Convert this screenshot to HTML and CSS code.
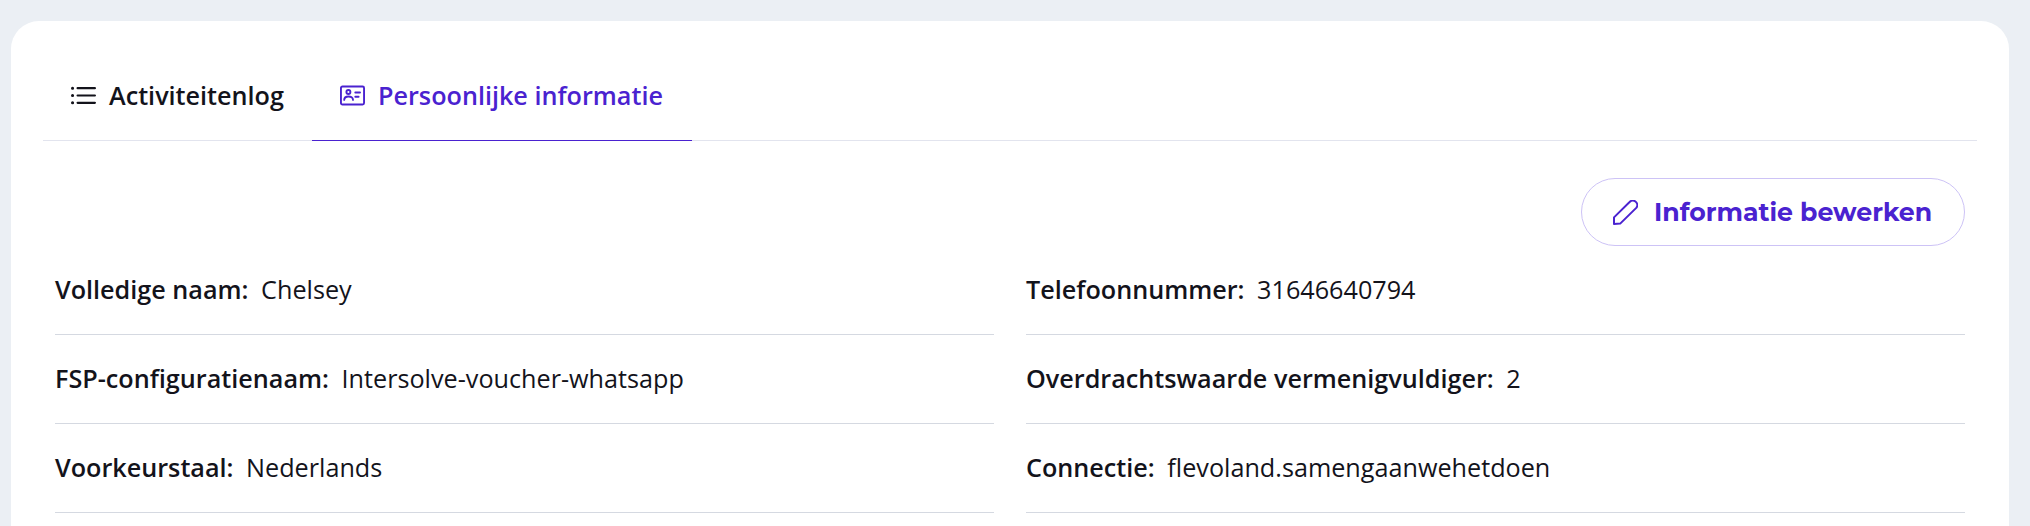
FILE: index.html
```html
<!DOCTYPE html>
<html lang="nl">
<head>
<meta charset="utf-8">
<title>Persoonlijke informatie</title>
<link rel="stylesheet" href="styles.css">
</head>
<body>
<main class="card">
  <nav class="tabs">
    <a class="tab">
      <svg class="icon" viewBox="0 0 25 25" fill="none" stroke="currentColor" stroke-linecap="round" stroke-width="2.2"><path d="M6.6 5.2H23.9M6.6 12.5H23.9M6.6 19.8H23.9"/><path stroke-width="3" d="M1.5 5.2H1.6M1.5 12.5H1.6M1.5 19.8H1.6"/></svg>
      <span>Activiteitenlog</span>
    </a>
    <a class="tab tab-active">
      <svg class="icon" viewBox="0 0 25 20" fill="none" stroke="currentColor" stroke-linecap="round" stroke-width="1.9"><rect x=".95" y=".95" width="23.1" height="18.1" rx="1.5"/><circle cx="8.4" cy="6.5" r="2"/><path d="M4.2 14.4C4.2 9.8 13 9.8 13 14.4M15.3 7H20M15.3 11.2H18.6"/></svg>
      <span>Persoonlijke informatie</span>
    </a>
  </nav>
  <section class="panel">
    <div class="actions">
      <button class="edit">
        <svg class="icon" viewBox="0 0 25 25" fill="none" stroke="currentColor" stroke-linejoin="round" stroke-width="2"><path d="M1 24V17.4L16.6 2A4.4 4.4 0 0 1 23 8.1L7.2 23.6Z"/></svg>
        <span>Informatie bewerken</span>
      </button>
    </div>
    <dl class="grid">
      <div class="row"><dt>Volledige naam:</dt><dd>Chelsey</dd></div>
      <div class="row"><dt>Telefoonnummer:</dt><dd>31646640794</dd></div>
      <div class="row"><dt>FSP-configuratienaam:</dt><dd>Intersolve-voucher-whatsapp</dd></div>
      <div class="row"><dt>Overdrachtswaarde vermenigvuldiger:</dt><dd>2</dd></div>
      <div class="row"><dt>Voorkeurstaal:</dt><dd>Nederlands</dd></div>
      <div class="row"><dt>Connectie:</dt><dd>flevoland.samengaanwehetdoen</dd></div>
    </dl>
  </section>
</main>
</body>
</html>
```
FILE: styles.css
```css
* { box-sizing: border-box; }
body {
  margin: 0;
  height: 526px;
  padding: 21px 21px 0 11px;
  background: #ebeff4;
  color: #13131b;
  font: 400 25.2px/36px "Open Sans", sans-serif;
}
.card {
  height: 505px;
  padding: 32px 32px 0;
  border-radius: 28px 28px 0 0;
  background: #fff;
}
.tabs {
  display: flex;
  height: 88px;
  box-shadow: inset 0 -1px #e2e4ee;
}
.tab {
  display: flex;
  align-items: center;
  gap: 13px;
  height: 88px;
  padding: 0 28px 3px;
  font-weight: 600;
}
.tab span { margin-top: -1px; }
.tab:first-child { width: 269px; }
.tab-active {
  width: 380px;
  color: #4a22d0;
  box-shadow: inset 0 -1px #4a22d0;
}
.icon { flex: none; width: 25px; height: 25px; }
.panel { padding: 37px 12px 0; }
.actions { display: flex; justify-content: flex-end; }
.edit {
  display: flex;
  align-items: center;
  gap: 16px;
  width: 384px;
  height: 68px;
  padding: 0 0 0 31px;
  border: 1px solid #cdc3f6;
  border-radius: 34px;
  background: #fff;
  color: #4a22d0;
  font: 700 25.2px/36px Montserrat, Inter, sans-serif;
  white-space: nowrap;
}
.grid {
  display: grid;
  grid-template-columns: 1fr 1fr;
  column-gap: 32px;
  margin: 0;
}
.row {
  display: flex;
  gap: 12.6px;
  height: 89px;
  padding-top: 25px;
  border-bottom: 1px solid #d5d9e1;
}
dt { font-weight: 600; }
dd { margin: 0; }
```
